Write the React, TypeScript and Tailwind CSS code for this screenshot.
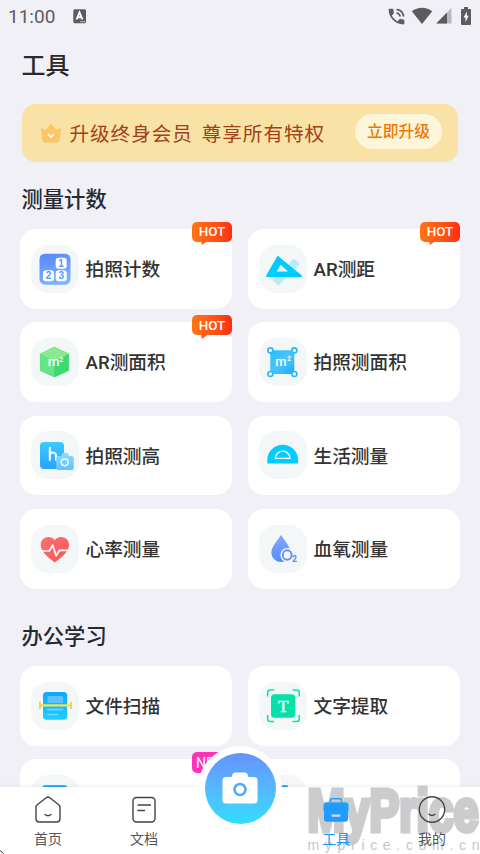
import React from "react";

function CountIcon() {
  return (
    <svg viewBox="0 0 48 48" className="size-12">
      <defs>
        <linearGradient id="count" x1="0" y1="0" x2="0.3" y2="1">
          <stop offset="0" stopColor="#5686fd" />
          <stop offset="1" stopColor="#7cb2ff" />
        </linearGradient>
      </defs>
      <rect x="8.5" y="8.7" width="31" height="31" rx="5.5" fill="url(#count)" />
      <rect x="24.7" y="12.7" width="11" height="11" rx="3" fill="#fff" />
      <rect x="12" y="25.2" width="11" height="11" rx="3" fill="#fff" />
      <rect x="24.7" y="25.2" width="11" height="11" rx="3" fill="#fff" />
      <g fill="#5b94fb" fontFamily="Liberation Sans, sans-serif" fontSize="10" fontWeight="700" textAnchor="middle">
        <text x="30" y="21.8">1</text>
        <text x="17.5" y="34.3">2</text>
        <text x="30.2" y="34.3">3</text>
      </g>
    </svg>
  );
}

function RulerIcon() {
  return (
    <svg viewBox="0 0 48 48" className="size-12">
      <path d="M35 14l5.3 5-21 21-5.6-5.3z" fill="#b9e9fd" stroke="#b9e9fd" strokeLinejoin="round" />
      <path d="M18.9 11.9L42 31H8z" fill="#00ccff" stroke="#00ccff" strokeWidth="1.8" strokeLinejoin="round" />
      <path d="M21.7 19.7L17.7 26.5h11.2z" fill="#f4f7f7" />
      <path d="M23.6 13.6L41.2 28" fill="none" stroke="#e3f7fd" strokeWidth="1.8" strokeDasharray="0.8 1.9" />
    </svg>
  );
}

function HexIcon() {
  return (
    <svg viewBox="0 0 48 48" className="size-12">
      <path d="M23.4 9.2L37.5 16v16.5l-14.1 6.4-14-6.4V16z" fill="#54e07c" stroke="#54e07c" strokeLinejoin="round" />
      <path d="M23.4 9.2L37.5 16l-14.1 7.5-14-7.5z" fill="#8bea90" />
      <path d="M9.4 16l14 7.5v15.4l-14-6.4z" fill="#68e389" />
      <path d="M37.5 16l-14.1 7.5v15.4l14.1-6.4z" fill="#3cda70" />
      <text x="16.8" y="27.8" fill="#fff" fontFamily="Roboto, sans-serif" fontSize="13.5" fontWeight="500">m</text>
      <text x="28.5" y="23.5" fill="#fff" fontFamily="Roboto, sans-serif" fontSize="6.5" fontWeight="700">2</text>
    </svg>
  );
}

function AreaIcon() {
  return (
    <svg viewBox="0 0 48 48" className="size-12">
      <defs>
        <linearGradient id="area" x1="0" y1="0" x2="1" y2="1">
          <stop offset="0" stopColor="#2bbcff" />
          <stop offset="0.5" stopColor="#49c5ff" />
          <stop offset="1" stopColor="#1fabff" />
        </linearGradient>
      </defs>
      <rect x="11.3" y="12.3" width="24" height="23.7" fill="url(#area)" />
      <g fill="#f4f7f7" stroke="#2bb8fb" strokeWidth="1.6">
        <circle cx="11.4" cy="12.4" r="2.5" />
        <circle cx="35.4" cy="12.4" r="2.5" />
        <circle cx="11.4" cy="36" r="2.5" />
        <circle cx="35.4" cy="36" r="2.5" />
      </g>
      <text x="16.3" y="27.6" fill="#fff" fontFamily="Roboto, sans-serif" fontSize="13" fontWeight="500">m</text>
      <text x="28.3" y="23" fill="#fff" fontFamily="Roboto, sans-serif" fontSize="6.5" fontWeight="700">2</text>
    </svg>
  );
}

function HeightIcon() {
  return (
    <svg viewBox="0 0 48 48" className="size-12">
      <defs>
        <linearGradient id="height" x1="0" y1="0" x2="0" y2="1">
          <stop offset="0" stopColor="#3dcaff" />
          <stop offset="1" stopColor="#27a4ff" />
        </linearGradient>
        <linearGradient id="cam" x1="0" y1="0" x2="0" y2="1">
          <stop offset="0" stopColor="#8fdcff" />
          <stop offset="1" stopColor="#62c1ff" />
        </linearGradient>
      </defs>
      <rect x="9" y="11" width="24" height="27" rx="4" fill="url(#height)" />
      <path d="M18.8 16.3v13.5M18.8 24.5c0-4 6.2-4.2 6.2 0v5.3" fill="none" stroke="#fff" strokeWidth="2" />
      <path
        d="M27.2 25h3l1.3-3h5.3l1.4 3h2.6q2 0 2 2v10q0 2-2 2H27.2q-2 0-2-2V27q0-2 2-2z"
        fill="url(#cam)"
      />
      <circle cx="33.7" cy="31.3" r="3.4" fill="none" stroke="#fff" strokeWidth="1.4" />
    </svg>
  );
}

function ProtractorIcon() {
  return (
    <svg viewBox="0 0 48 48" className="size-12">
      <path d="M8.3 32.5v-3.3a15.4 15.4 0 0 1 30.8 0v3.3z" fill="#00ccff" />
      <path d="M16.4 27.4a7.3 7.3 0 0 1 14.6 0z" fill="none" stroke="#fff" strokeWidth="1.4" strokeLinejoin="round" />
    </svg>
  );
}

function HeartIcon() {
  return (
    <svg viewBox="0 0 48 48" className="size-12">
      <defs>
        <linearGradient id="heart" x1="0" y1="0" x2="1" y2="1">
          <stop offset="0" stopColor="#f87373" />
          <stop offset="1" stopColor="#ff5252" />
        </linearGradient>
      </defs>
      <path
        d="M23.8 37.4C16 31.8 9.7 26.5 9.7 19.8c0-8 9.8-10.6 14.1-4.6 4.3-6 14.2-3.4 14.2 4.6 0 6.7-6.4 12-14.2 17.6z"
        fill="url(#heart)"
      />
      <path
        d="M8.5 26h9.7l3.5-5.8 3.5 10.5 3.3-5.4h11"
        fill="none"
        stroke="#fff"
        strokeWidth="1.7"
        strokeLinejoin="round"
      />
    </svg>
  );
}

function OxygenIcon() {
  return (
    <svg viewBox="0 0 48 48" className="size-12">
      <defs>
        <linearGradient id="drop" x1="0" y1="0" x2="0" y2="1">
          <stop offset="0" stopColor="#84a8fa" />
          <stop offset="1" stopColor="#5a8bfd" />
        </linearGradient>
      </defs>
      <path d="M22 10c3.5 5.5 9.6 11.5 9.6 18.2a9.7 9.7 0 0 1-19.3 0C12.3 21.5 18.5 15.5 22 10z" fill="url(#drop)" />
      <ellipse cx="28.2" cy="30" rx="6.8" ry="7.1" fill="#f4f7f7" />
      <ellipse cx="28.2" cy="30" rx="4.4" ry="4.8" fill="none" stroke="#5f90fb" strokeWidth="1.9" />
      <text x="33" y="37.3" fill="#5f90fb" fontFamily="Roboto, sans-serif" fontSize="8.5" fontWeight="900">2</text>
    </svg>
  );
}

function ScanIcon() {
  return (
    <svg viewBox="0 0 48 48" className="size-12">
      <defs>
        <linearGradient id="scan" x1="0" y1="0" x2="0" y2="1">
          <stop offset="0" stopColor="#10a6ff" />
          <stop offset="1" stopColor="#20d0ff" />
        </linearGradient>
      </defs>
      <rect x="12" y="10" width="24.2" height="27.8" rx="3.5" fill="url(#scan)" />
      <rect x="16.5" y="14" width="15.5" height="7" rx="1" fill="#5cc2ff" />
      <path d="M16.8 27.5h14.8M16.8 32.5h9.8" stroke="#70dcff" strokeWidth="1.6" strokeLinecap="round" />
      <path d="M9 23.4h31" stroke="#ffe23c" strokeWidth="2.2" />
      <path d="M9 20.2v6.5M40 20.2v6.5" stroke="#f0b92a" strokeWidth="1.9" strokeDasharray="1.6 0.7" />
    </svg>
  );
}

function TextIcon() {
  return (
    <svg viewBox="0 0 48 48" className="size-12">
      <rect x="12" y="12.3" width="24.3" height="23.5" rx="3.5" fill="#06e0aa" />
      <path
        d="M8.7 14.5v-4q0-2.5 2.5-2.5h4M33.5 8h4.2q2.5 0 2.5 2.5v4M40.2 33v4q0 2.5-2.5 2.5h-4.2M15.2 39.5h-4q-2.5 0-2.5-2.5v-4"
        fill="none"
        stroke="#12e2ae"
        strokeWidth="1.6"
      />
      <text x="24.1" y="29.6" fill="#fff" fontFamily="Liberation Serif, serif" fontSize="17" textAnchor="middle" stroke="#fff" strokeWidth="0.4">
        T
      </text>
    </svg>
  );
}

function SheetIcon() {
  return (
    <svg viewBox="0 0 48 48" className="size-12">
      <rect x="11.7" y="10.3" width="24.3" height="28" rx="2" fill="#149fff" />
    </svg>
  );
}

function SmallSheetIcon() {
  return (
    <svg viewBox="0 0 48 48" className="size-12">
      <rect x="12" y="10.3" width="17" height="28" rx="1" fill="#149fff" />
    </svg>
  );
}

type Tool = { name: string; icon: React.ReactNode; badge?: string };

const measureTools: Tool[] = [
  { name: "拍照计数", icon: <CountIcon />, badge: "HOT" },
  { name: "AR测距", icon: <RulerIcon />, badge: "HOT" },
  { name: "AR测面积", icon: <HexIcon />, badge: "HOT" },
  { name: "拍照测面积", icon: <AreaIcon /> },
  { name: "拍照测高", icon: <HeightIcon /> },
  { name: "生活测量", icon: <ProtractorIcon /> },
  { name: "心率测量", icon: <HeartIcon /> },
  { name: "血氧测量", icon: <OxygenIcon /> },
];

const officeTools: Tool[] = [
  { name: "文件扫描", icon: <ScanIcon /> },
  { name: "文字提取", icon: <TextIcon /> },
  { name: "", icon: <SheetIcon />, badge: "NEW" },
  { name: "", icon: <SmallSheetIcon /> },
];

function Badge({ label }: { label: string }) {
  if (label === "NEW") {
    return (
      <span className="absolute -top-[7px] right-0 flex h-[21px] w-10 items-center rounded-[5px] bg-[#ff33b4] pl-1 font-['Roboto',sans-serif] text-sm text-white">
        NEW
      </span>
    );
  }
  return (
    <span className="absolute -top-[7px] right-0 flex h-5 w-10 items-center justify-center rounded-[5px] bg-gradient-to-r from-[#ff7518] to-[#ff2c12] pt-px font-['Roboto',sans-serif] text-[13.4px] font-medium text-white">
      {label}
      <svg viewBox="0 0 8 5" className="absolute -bottom-[3.5px] left-[9px] h-[5px] w-2">
        <path d="M0 0h8L0.8 5z" fill="#ff6217" />
      </svg>
    </span>
  );
}

function ToolGrid({ tools }: { tools: Tool[] }) {
  return (
    <div className="grid grid-cols-2 gap-x-4 gap-y-[13.6px] px-5">
      {tools.map((tool, idx) => (
        <div key={idx} className="relative flex h-[79.8px] items-center gap-[6.5px] rounded-2xl bg-white pl-[11px]">
          <div className="size-12 shrink-0 rounded-[18px] bg-[#f4f7f7]">{tool.icon}</div>
          <span className="whitespace-nowrap pt-[2.5px] text-[18.7px] font-medium text-[#333]">{tool.name}</span>
          {tool.badge && <Badge label={tool.badge} />}
        </div>
      ))}
    </div>
  );
}

function StatusBar() {
  return (
    <header className="flex h-8 shrink-0 items-center pl-2 text-[#5c5c5e]">
      <span className="pt-[2px] font-['Roboto',sans-serif] text-[19px]">11:00</span>
      <svg viewBox="0 0 14 15" className="ml-[18px] h-[15px] w-[14px]">
        <rect x="0.3" y="0.3" width="12.7" height="14" rx="1.5" fill="currentColor" />
        <path d="M3.5 10.5l3-7 3 7M4.8 8.2h3.5" fill="none" stroke="#fff" strokeWidth="1.9" />
        <path d="M7 12.7h5" stroke="#bbb" />
      </svg>
      <div className="ml-auto flex items-center pr-[9px]">
        <svg viewBox="0 0 24 24" className="h-[21px] w-[21px]" fill="currentColor">
          <path d="M20 15.5c-1.25 0-2.45-.2-3.57-.57-.35-.11-.74-.03-1.02.24l-2.2 2.2c-2.83-1.44-5.15-3.75-6.59-6.59l2.2-2.21c.28-.26.36-.65.25-1C8.7 6.45 8.5 5.25 8.5 4c0-.55-.45-1-1-1H4c-.55 0-1 .45-1 1 0 9.39 7.61 17 17 17 .55 0 1-.45 1-1v-3.5c0-.55-.45-1-1-1zM19 12h2c0-4.97-4.03-9-9-9v2c3.87 0 7 3.13 7 7zm-4 0h2c0-2.76-2.24-5-5-5v2c1.66 0 3 1.34 3 3z" />
        </svg>
        <svg viewBox="0 0 22 18" className="ml-[4px] h-[18px] w-[22px]" fill="currentColor">
          <path d="M0.8 4.3C6.5-0.4 15.5-0.4 21.2 4.3L11 17z" />
        </svg>
        <svg viewBox="0 0 16 16" className="ml-[3px] h-4 w-4">
          <path d="M0.2 15.5L15.5 0v15.5z" fill="#b9b9bd" />
          <path d="M0.2 15.5L11 4.6v10.9z" fill="currentColor" />
        </svg>
        <svg viewBox="0 0 10 18" className="mb-px ml-[9px] h-[18px] w-[10px]">
          <path d="M3 0h4v2h2q1 0 1 1v14q0 1-1 1H1q-1 0-1-1V3q0-1 1-1h2z" fill="currentColor" />
          <path d="M6 4.5L2.5 10.5H4.5V15L7.8 8.8H5.8z" fill="#fff" />
        </svg>
      </div>
    </header>
  );
}

function Banner() {
  return (
    <section className="mx-[22px] mt-[20px] flex h-[58px] shrink-0 items-center rounded-[14px] bg-[#f9e2a5] pl-[18px] pr-4">
      <svg viewBox="0 0 22 20" className="h-5 w-[22px]">
        <path
          d="M1 5.5l5 1.8 5-6.3 5 6.3 5-1.8-2 12.5q-.2 1.2-1.4 1.2H4.4Q3.2 19.2 3 18z"
          fill="#fcc566"
          stroke="#fcc566"
          strokeWidth="0.8"
          strokeLinejoin="round"
        />
        <path d="M8 11l3 3 3-3" fill="none" stroke="#fff" strokeWidth="1.7" />
      </svg>
      <div className="ml-[7.5px] flex gap-[9px] whitespace-nowrap pt-[3px] text-[19.6px] tracking-[0.95px] text-[#a2401a]">
        <span>升级终身会员</span>
        <span>尊享所有特权</span>
      </div>
      <button className="mb-[3px] ml-auto h-[35px] w-[87px] whitespace-nowrap rounded-full bg-[#fdf6db] pt-px text-[15.8px] font-medium text-[#ef7900]">
        立即升级
      </button>
    </section>
  );
}

function Watermark() {
  return (
    <svg viewBox="0 0 174 70" className="absolute bottom-0 right-0 h-[70px] w-[174px]">
      <text
        x="1.5"
        y="47"
        textLength="171"
        lengthAdjust="spacingAndGlyphs"
        fill="#cbccce"
        stroke="#cbccce"
        strokeWidth="5"
        fontFamily="Liberation Sans Narrow, Liberation Sans, sans-serif"
        fontSize="59"
        fontWeight="700"
      >
        MyPrice
      </text>
      <text x="1.5" y="66" textLength="172" fill="#c6c6c8" fontFamily="Liberation Sans, sans-serif" fontSize="14">
        myprice.com.cn
      </text>
    </svg>
  );
}

function TabBar() {
  return (
    <nav className="relative flex h-[67px] shrink-0 bg-white text-[14px] text-[#555] shadow-[0_-1px_4px_rgba(0,0,0,0.06)]">
      <Watermark />
      <div className="absolute -top-[41px] left-[198px] flex size-[84px] items-center justify-center rounded-full bg-white">
        <div className="flex size-[71px] items-center justify-center rounded-full bg-gradient-to-b from-[#6592ff] to-[#2fdcff]">
          <svg viewBox="0 0 36 32" className="h-8 w-9">
            <path
              d="M4 5h5.5l1.2-3Q11.3 0.5 13 0.5h10q1.7 0 2.3 1.5l1.2 3H32q3.5 0 3.5 3.5V28q0 3.5-3.5 3.5H4Q.5 31.5.5 28V8.5Q.5 5 4 5z"
              fill="#fff"
            />
            <circle cx="18" cy="17.5" r="5.5" fill="none" stroke="#4fa9ff" strokeWidth="2.6" />
          </svg>
        </div>
      </div>
      <a className="relative flex flex-1 flex-col items-center pt-[9px]">
        <svg viewBox="0 0 28 28" className="size-7" fill="none" stroke="#444" strokeWidth="1.4" strokeLinecap="round" strokeLinejoin="round">
          <path d="M12.6 1.5q1.4-1 2.8 0l9.4 7.3q1.2 1 1.2 2.5v11.2q0 3.5-3.5 3.5h-17Q2 26 2 22.5V11.3q0-1.5 1.2-2.5z" />
          <path d="M11 18.5q3 2.4 6 0" />
        </svg>
        <span className="mt-[5px] leading-5">首页</span>
      </a>
      <a className="relative flex flex-1 flex-col items-center pt-[9px]">
        <svg viewBox="0 0 28 28" className="size-7" fill="none" stroke="#444" strokeWidth="1.4" strokeLinecap="round">
          <rect x="3" y="1.5" width="22" height="24.5" rx="3.5" />
          <path d="M8 9h12.5M8 14.5h6.5" />
        </svg>
        <span className="mt-[5px] leading-5">文档</span>
      </a>
      <div className="flex-1" />
      <a className="relative flex flex-1 flex-col items-center pt-[9px] text-[#1296fb]">
        <svg viewBox="0 0 28 28" className="size-7">
          <path d="M8.5 7V4q0-1.2 1.2-1.2h8.6q1.2 0 1.2 1.2v3" fill="none" stroke="#2a9cf5" strokeWidth="1.5" />
          <path d="M4.5 6.5h19q2.5 0 2.5 2.5v14q0 2.7-2.7 2.7H4.7Q2 25.7 2 23V9q0-2.5 2.5-2.5z" fill="#219bff" />
          <path d="M1.5 15v-6q0-2.8 3-2.8h19q3 0 3 2.8v6" fill="none" stroke="#43b9e9" strokeWidth="0.8" />
          <rect x="9.5" y="18.5" width="9" height="2.3" rx="0.8" fill="#d7dbe0" />
        </svg>
        <span className="mt-[5px] leading-5">工具</span>
      </a>
      <a className="relative flex flex-1 flex-col items-center pt-[9px]">
        <svg viewBox="0 0 28 28" className="size-7" fill="none" stroke="#444" strokeWidth="1.4" strokeLinecap="round">
          <circle cx="14" cy="13.5" r="12.7" />
          <path d="M11 18.3q3 2.4 6 0" />
        </svg>
        <span className="mt-[5px] leading-5">我的</span>
      </a>
      <svg viewBox="0 0 5 5" className="absolute bottom-0 left-0 size-[5px]">
        <path d="M0 1.5L3.5 4.5" stroke="#333" strokeWidth="1" />
      </svg>
    </nav>
  );
}

export default function App() {
  return (
    <div className="mx-auto flex h-[854px] w-[480px] flex-col overflow-hidden bg-[#f1f0f7] font-['Roboto','Noto_Sans_CJK_SC',sans-serif]">
      <StatusBar />
      <main className="flex min-h-0 flex-1 flex-col overflow-hidden">
        <h1 className="mt-[15px] h-[37px] shrink-0 pl-[21.5px] text-2xl leading-[38px] font-medium text-[#2a2a2c]">工具</h1>
        <Banner />
        <h2 className="mt-[22px] mb-[12.8px] h-8 shrink-0 pl-[21.5px] text-[21.3px] leading-8 font-medium text-[#252a31]">测量计数</h2>
        <ToolGrid tools={measureTools} />
        <h2 className="mt-[32px] mb-[13px] h-8 shrink-0 pl-[21.5px] text-[21.3px] leading-8 font-medium text-[#252a31]">办公学习</h2>
        <ToolGrid tools={officeTools} />
      </main>
      <TabBar />
    </div>
  );
}
